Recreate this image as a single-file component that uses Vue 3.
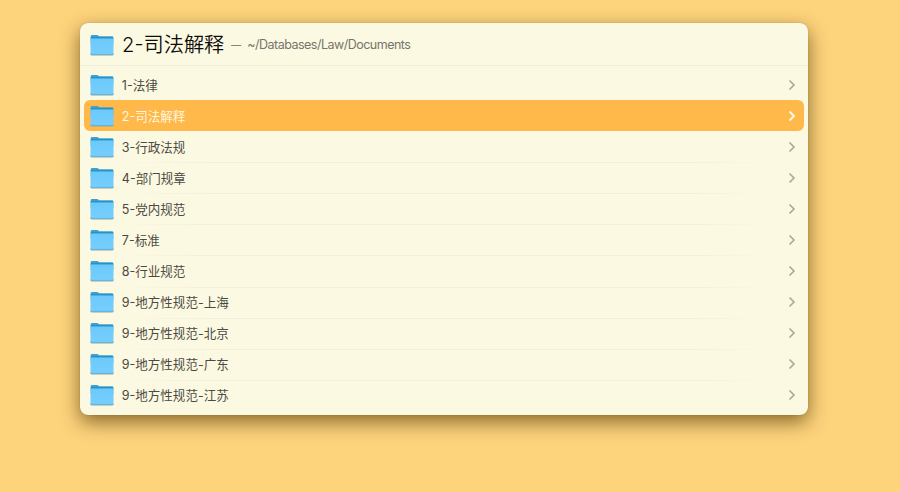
<script setup>
import { ref } from 'vue'

const folders = [
  '1-法律',
  '2-司法解释',
  '3-行政法规',
  '4-部门规章',
  '5-党内规范',
  '7-标准',
  '8-行业规范',
  '9-地方性规范-上海',
  '9-地方性规范-北京',
  '9-地方性规范-广东',
  '9-地方性规范-江苏',
]
const selected = ref(1)
</script>

<template>
  <main class="desktop">
    <svg class="defs" width="0" height="0" aria-hidden="true">
      <defs>
        <linearGradient id="front" x1="0" y1="0" x2="0" y2="1">
          <stop offset="0" stop-color="#6bcafb" />
          <stop offset="1" stop-color="#76cefe" />
        </linearGradient>
        <symbol id="folder" viewBox="0 0 24 22">
          <path d="M.7 2.200Q.7.900 2 .9h5.200q.7 0 1.100.5l.9.9H22q1.300 0 1.300 1.300V10H.7z" fill="#3ba2d2" />
          <path d="M.5 19h23v1.300q0 1.200-1.300 1.200H1.800Q.5 21.500.5 20.300z" fill="#8fa6a2" />
          <path d="M.5 4h23v15.400q0 1.300-1.300 1.300H1.800Q.5 20.700.5 19.400z" fill="url(#front)" />
          <path d="M.7 3.900h22.600" stroke="#2186ba" stroke-width="1" />
          <path d="M.9 20.400h22.200" stroke="#5aaed6" stroke-width=".7" />
        </symbol>
      </defs>
    </svg>
    <section class="panel">
      <header class="header">
        <svg class="folder"><use href="#folder" /></svg>
        <h1 class="title">2-司法解释</h1>
        <span class="dash">—</span>
        <span class="path">~/Databases/Law/Documents</span>
      </header>
      <ul class="list">
        <li
          v-for="(name, i) in folders"
          :key="name"
          class="row"
          :class="{ selected: i === selected }"
          @click="selected = i"
        >
          <svg class="folder"><use href="#folder" /></svg>
          <span class="name">{{ name }}</span>
          <svg class="chevron" viewBox="0 0 8 12">
            <path d="M1.500 1.500 6 6l-4.500 4.500" />
          </svg>
        </li>
      </ul>
    </section>
  </main>
</template>

<style>
body {
  background: #fdd37c;
}
</style>

<style scoped>
.desktop {
  box-sizing: border-box;
  height: 492px;
  padding: 23px 92px 0 80px;
  overflow: hidden;
  background: #fdd37c;
  font-family: Inter, "Noto Sans CJK SC", sans-serif;
}
.defs {
  position: absolute;
}
.panel {
  box-sizing: border-box;
  height: 391.500px;
  border-radius: 8px;
  background: #fcf9e2;
  box-shadow: 0 0 1px rgba(90, 60, 0, 0.5), 0 7px 19px rgba(75, 48, 0, 0.66);
}
.header {
  box-sizing: border-box;
  display: flex;
  align-items: center;
  height: 43px;
  padding-left: 10px;
  border-bottom: 1px solid #f0edd9;
}
.folder {
  flex: none;
  width: 24px;
  height: 22px;
}
.header .folder {
  margin-top: 1px;
}
.title {
  margin: 0 0 0 8px;
  padding-top: 2px;
  font-size: 20.200px;
  font-weight: 350;
  line-height: 30px;
  color: #0c0c08;
  white-space: nowrap;
}
.dash {
  margin-left: 6.500px;
  font-size: 12px;
  transform: scaleX(0.85);
  transform-origin: left;
  color: #87857a;
}
.path {
  margin-left: 4.500px;
  padding-top: 1px;
  font-size: 12.500px;
  letter-spacing: -0.51px;
  color: #77756a;
}
.list {
  margin: 0;
  padding: 3.400px 4px 0;
  list-style: none;
}
.row {
  position: relative;
  box-sizing: border-box;
  display: flex;
  align-items: center;
  height: 31.020px;
  padding: 0.600px 8px 0 6px;
  border-radius: 6px;
  color: #4b4a42;
}
.row:nth-child(n + 3):not(:last-child)::after {
  content: "";
  position: absolute;
  right: 40px;
  bottom: -1px;
  left: 36px;
  height: 1px;
  background: linear-gradient(90deg, transparent, #f1eedb 15%, #f1eedb 88%, transparent);
}
.name {
  flex: 1;
  margin-left: 7.800px;
  padding-top: 1.400px;
  font-size: 12.530px;
  line-height: 20px;
  white-space: nowrap;
}
.chevron {
  width: 8px;
  height: 12px;
  margin-bottom: 0.600px;
  fill: none;
  stroke: #aaa79a;
  stroke-width: 1.600;
}
.selected {
  background: #ffb84a;
  color: #fff7de;
}
.selected .chevron {
  stroke: #fff8e5;
  stroke-width: 2;
}
</style>
